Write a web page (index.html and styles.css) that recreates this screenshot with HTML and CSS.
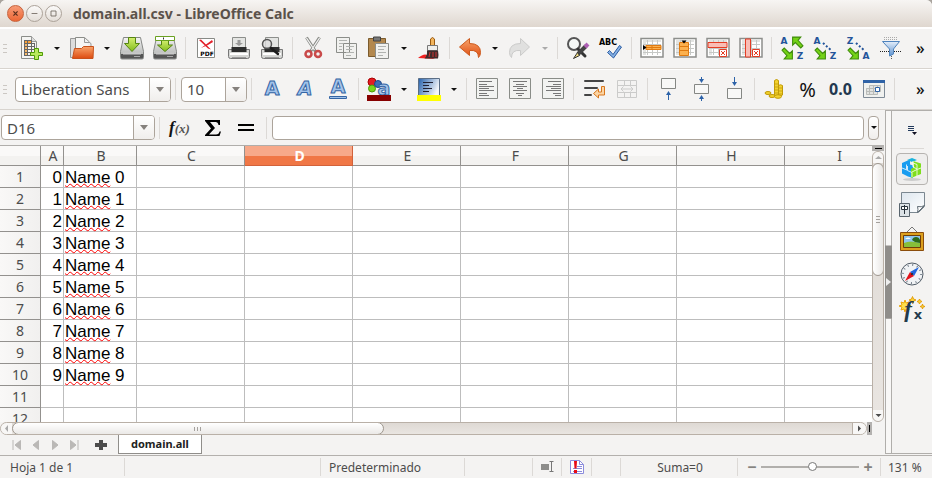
FILE: index.html
```html
<!DOCTYPE html>
<html lang="es">
<head>
<meta charset="utf-8">
<title>domain.all.csv - LibreOffice Calc</title>
<link rel="stylesheet" href="styles.css">
</head>
<body>
<svg class="defs" width="0" height="0" aria-hidden="true">
  <defs>
    <linearGradient id="orange" x2="0" y2="1"><stop offset="0" stop-color="#f9a56c"/><stop offset="1" stop-color="#dd4b10"/></linearGradient>
    <linearGradient id="metal" x2="0" y2="1"><stop offset="0" stop-color="#f4f4f4"/><stop offset="1" stop-color="#a9aba9"/></linearGradient>
    <linearGradient id="blue" x2="0" y2="1"><stop offset="0" stop-color="#e4eefa"/><stop offset="1" stop-color="#5d92d0"/></linearGradient>
    <linearGradient id="marine" x2="1" y2="0.4"><stop offset="0" stop-color="#2460ac"/><stop offset="1" stop-color="#f3f6fa"/></linearGradient>
    <linearGradient id="green" x2="0" y2="1"><stop offset="0" stop-color="#d4ef70"/><stop offset="1" stop-color="#83bd1c"/></linearGradient>
    <linearGradient id="paper" x2="1" y2="1"><stop offset="0" stop-color="#dde6ee"/><stop offset="1" stop-color="#fff"/></linearGradient>
    <symbol id="i-drive" viewBox="0 0 24 24">
      <path d="M3.500 1.500h17l3 14v6q0 1.500-1.500 1.500H2Q.5 23 .5 21.500v-6z" fill="url(#metal)" stroke="#858785"/>
      <path d="M1 18h22v3.500q0 1-1 1H2q-1 0-1-1z" fill="#555"/><path d="M3 16.500h18v2H3z" fill="#c9c9c9"/><path d="M14 20.500h6" stroke="#aaa"/>
    </symbol>
    <symbol id="i-down" viewBox="0 0 24 24"><path d="M8.500 1.500h7v6h4L12 15.500 4.500 7.500h4z" fill="url(#green)" stroke="#548411"/></symbol>
    <symbol id="i-printer" viewBox="0 0 24 24">
      <path d="M5.500 1.500h13v11h-13z" fill="#e4e5e3" stroke="#8c8e8b"/>
      <path d="M1.500 13.500h21v7q0 2-2 2h-17q-2 0-2-2z" fill="#d5d6d4" stroke="#777"/>
      <path d="M4.500 11h15v5h-15z" fill="#2c2d2d"/><path d="M3 17h18v2H3z" fill="#fff"/><path d="M5 21h14v1H5z" fill="#999"/>
    </symbol>
    <symbol id="i-page" viewBox="0 0 24 24"><path d="M1.500 1.500h21v20h-21z" fill="#f2f3f1" stroke="#8a8d88"/></symbol>
    <symbol id="i-sheet" viewBox="0 0 24 24">
      <path d="M1 2.500h22v18.500H1z" fill="#fff" stroke="#8d8f8c" stroke-width="1.500"/>
      <path d="M3 4h18v2H3zM3 4h3v15H3z" fill="#e3e4e2"/>
      <path d="M3 8.500h18M3 12.500h18M3 16.500h18M7.500 4v15M12.500 4v15M17.500 4v15" stroke="#c6c8c5"/>
    </symbol>
    <symbol id="i-sortarrow" viewBox="0 0 12 12"><path d="M1 3 3 1l5 5 2.500-2.500V11H3l2.500-3z" fill="#73d216" stroke="#3f8b0a"/></symbol>
  </defs>
</svg>

<div class="window">
  <header class="titlebar">
    <button class="win-btn close" aria-label="Cerrar"><svg viewBox="0 0 18 18"><path d="m6.500 6.500 5 5m0-5-5 5"/></svg></button>
    <button class="win-btn" aria-label="Minimizar"><svg viewBox="0 0 18 18"><path d="M5.500 9h7"/></svg></button>
    <button class="win-btn" aria-label="Maximizar"><svg viewBox="0 0 18 18"><path d="M6 6h6v6H6z"/></svg></button>
    <h1>domain.all.csv - LibreOffice Calc</h1>
  </header>

  <div class="toolbar" role="toolbar" aria-label="Estándar">
    <span class="grip"></span>
    <button class="tool" aria-label="Nuevo"><svg viewBox="0 0 24 24"><path d="M1.500.500h10l5 5v17h-15z" fill="#f5f5f3" stroke="#8b8d89"/><path d="M11.500.500v5h5" fill="#ddd" stroke="#999"/><path d="M4 4h8v3H4z" fill="#f7a13a"/><path d="M4 7h3v12H4z" fill="#f9b968"/><path d="M4.500 4v15M7.500 4v15M11.500 4v15M14.500 7v7M4 4.500h8M4 7.500h11M4 10.500h11M4 13.500h11M4 16.500h8M4 19.500h8" stroke="#666" fill="none"/><path d="M14.500 12.500h4v4h4v3h-4v4h-4v-4h-4v-3h4z" fill="#b8ea5c" stroke="#4e9a06"/></svg></button>
    <button class="drop" aria-label="Plantillas"></button>
    <button class="tool" aria-label="Abrir"><svg viewBox="0 0 24 24"><path d="M.5 21.500v-19h6l1 2h4v17z" fill="#ddd" stroke="#999"/><path d="M5.500 13V1.500h9L19.500 6v9" fill="#f6f6f5" stroke="#8b8d89"/><path d="M14.500 1.500v5h5l1.500 1v7" fill="#eee" stroke="#999"/><path d="M4.500 12.500h7l2-2h10l-.5 12H2.500z" fill="url(#orange)" stroke="#c8511b"/></svg></button>
    <button class="drop" aria-label="Recientes"></button>
    <button class="tool" aria-label="Guardar"><svg viewBox="0 0 24 24"><use href="#i-drive"/><use href="#i-down"/></svg></button>
    <button class="tool" aria-label="Guardar como"><svg viewBox="0 0 24 24"><use href="#i-drive"/><path d="M8.500 4h7v5h4L12 15.500 4.500 9h4z" fill="url(#green)" stroke="#548411"/><path d="M2.500.500h19v4h-19z" fill="#fff" stroke="#6aa121"/><path d="M10.500 1.500v2" stroke="#333"/></svg></button>
    <span class="sep"></span>
    <button class="tool" aria-label="Exportar a PDF"><svg viewBox="0 0 24 24"><path d="M3.500 2.500h17v19h-17z" fill="#fff" stroke="#888a86"/><path d="M5 4l2-.5 10 10-3-1zM18 4l1 2-5 3-7 3 7-5z" fill="#e3202a"/><text x="13" y="20" class="pdf">PDF</text></svg></button>
    <button class="tool" aria-label="Imprimir"><svg viewBox="0 0 24 24"><use href="#i-printer"/><path d="M10.500 4h3v3H16l-4 3-4-3h2.500z" fill="#999"/></svg></button>
    <button class="tool" aria-label="Vista previa"><svg viewBox="0 0 24 24"><use href="#i-printer"/><circle cx="7" cy="8" r="4.500" fill="#ddd" fill-opacity=".8" stroke="#555" stroke-width="1.500"/><path d="m11 12 7 6" stroke="#1d1d1d" stroke-width="2.500" stroke-linecap="round"/></svg></button>
    <span class="sep"></span>
    <button class="tool" aria-label="Cortar"><svg viewBox="0 0 24 24"><path d="m5.500 1.500 9 14M18.500 1.500l-9 14" stroke="#888a85" stroke-width="3"/><path d="m5.500 2 8 12M18.500 2l-8 12" stroke="#f3f3f3" stroke-width="1.300"/><circle cx="7.500" cy="18" r="3" fill="none" stroke="#c94a4a" stroke-width="2.500"/><circle cx="17" cy="18" r="3" fill="none" stroke="#c94a4a" stroke-width="2.500"/></svg></button>
    <button class="tool" aria-label="Copiar"><svg viewBox="0 0 24 24"><path d="M2.500 1.500h13v15h-13zM9.500 7.500h13v15h-13z" fill="#f1f1ef" stroke="#8b8d89"/><path d="M5 4.500h8M5 7.500h4M5 10.500h3M5 13.500h3M12 10.500h8M12 13.500h6M12 16.500h8M12 19.500h5" stroke="#b1b3b0"/></svg></button>
    <button class="tool" aria-label="Pegar"><svg viewBox="0 0 24 24"><path d="M1.500 2.500h17v18h-17z" fill="#b3884e" stroke="#7b5b2d"/><path d="M6.500 1h7v4h-7z" fill="#777" stroke="#444"/><path d="M8.500 7.500h13v15h-13z" fill="#f1f1ef" stroke="#8b8d89"/><path d="M11 10.500h8M11 13.500h6M11 16.500h8M11 19.500h5" stroke="#b1b3b0"/></svg></button>
    <button class="drop" aria-label="Opciones de pegado"></button>
    <button class="tool" aria-label="Clonar formato"><svg viewBox="0 0 24 24"><path d="M1 22q6-5 9-3l8 4z" fill="#ef2020"/><path d="M13.500 3q2-3 4 0v7h-4z" fill="#f1b45c" stroke="#9a5b12"/><path d="M10.500 9.500h10v5h-10z" fill="#eeeeec" stroke="#777"/><path d="M10 14.500h11q1 5 0 8H7.500q3-3 2.500-8z" fill="#3e2b2b"/><path d="m13 16-1 5m4-5v5m3-5v5" stroke="#c33"/></svg></button>
    <span class="sep"></span>
    <button class="tool" aria-label="Deshacer"><svg viewBox="0 0 24 24"><path d="M11.500 2.500v5q11 0 11 9 0 3-2 5 0-8-9-7v5L1.500 11z" fill="url(#orange)" stroke="#cc5a1e"/></svg></button>
    <button class="drop" aria-label="Historial deshacer"></button>
    <button class="tool" aria-label="Restaurar" disabled><svg viewBox="0 0 24 24"><path d="M12.500 2.500v5q-11 0-11 9 0 3 2 5 0-8 9-7v5l9-8.500z" fill="#e0e0df" stroke="#cbcbca"/></svg></button>
    <button class="drop" aria-label="Historial restaurar" disabled></button>
    <span class="sep"></span>
    <button class="tool" aria-label="Buscar y reemplazar"><svg viewBox="0 0 24 24"><circle cx="8" cy="8" r="6" fill="#f5f8f6" stroke="#555" stroke-width="2"/><path d="m12 13 7 7" stroke="#333" stroke-width="3" stroke-linecap="round"/><path d="m20 10-8 8" stroke="#444" stroke-width="4"/><path d="m22 8-3 3" stroke="#ad5fb4" stroke-width="4"/><path d="m11.500 16.500-4 6 6-3z" fill="#f0dc80" stroke="#333"/></svg></button>
    <button class="tool" aria-label="Ortografía"><svg viewBox="0 0 24 24"><text x="9" y="9" class="abc">ABC</text><path d="m8.500 16.500 2-2 3.500 4 6.500-9 2 1.500-8 11z" fill="#86b1e4" stroke="#2a5ba2"/></svg></button>
    <span class="sep"></span>
    <button class="tool" aria-label="Insertar fila"><svg viewBox="0 0 24 24"><use href="#i-sheet"/><path d="M6 9.500h15v4H6zM6 11.500h15M12 9v5" fill="#fcb14f" stroke="#e07a10"/><path d="m3 9 3.500 2.500L3 14z"/></svg></button>
    <button class="tool" aria-label="Insertar columna"><svg viewBox="0 0 24 24"><use href="#i-sheet"/><path d="M6.500 6.500h9v13h-9zM6.500 10.500h9M6.500 14.500h9" fill="#fcb14f" stroke="#e07a10"/><path d="M8.500 4.500h5L11 7.500z"/></svg></button>
    <button class="tool" aria-label="Eliminar fila"><svg viewBox="0 0 24 24"><use href="#i-sheet"/><path d="M2 6.500h19v5H2z" fill="#f9bdb5" stroke="#e43d25"/><path d="M13.500 13.500h7v7h-7z" fill="#fff" stroke="#e43d25"/><path d="m15 15 4 4m0-4-4 4" stroke="#e43d25"/></svg></button>
    <button class="tool" aria-label="Eliminar columna"><svg viewBox="0 0 24 24"><use href="#i-sheet"/><path d="M6.500 3h5v18h-5z" fill="#f9bdb5" stroke="#e43d25"/><path d="M13.500 13.500h7v7h-7z" fill="#fff" stroke="#e43d25"/><path d="m15 15 4 4m0-4-4 4" stroke="#e43d25"/></svg></button>
    <span class="sep"></span>
    <button class="tool" aria-label="Ordenar"><svg viewBox="0 0 24 24"><use href="#i-sortarrow" x="1" y="11" width="13" height="13"/><g transform="rotate(180 17.500 6.500)"><use href="#i-sortarrow" x="11" y="0" width="13" height="13"/></g><text x="4" y="8" class="az">A</text><text x="20" y="23" class="az">Z</text></svg></button>
    <button class="tool" aria-label="Orden ascendente"><svg viewBox="0 0 24 24"><use href="#i-sortarrow" x="1" y="11" width="13" height="13"/><path d="m10 7 9 8" class="dots"/><text x="4" y="8" class="az">A</text><text x="20" y="23" class="az">Z</text></svg></button>
    <button class="tool" aria-label="Orden descendente"><svg viewBox="0 0 24 24"><use href="#i-sortarrow" x="1" y="11" width="13" height="13"/><path d="m10 7 9 8" class="dots"/><text x="4" y="8" class="az">Z</text><text x="20" y="23" class="az">A</text></svg></button>
    <button class="tool" aria-label="Filtro automático"><svg viewBox="0 0 24 24"><path d="M5 1.500h14M5 3.500h14" stroke="#aaa" stroke-dasharray="1 1"/><path d="M1 15.500h22" stroke="#222" stroke-dasharray="1 1"/><path d="M3.500 5.500h17L14.500 13v5l-4 2v-7z" fill="url(#blue)" stroke="#4f83bd"/><path d="M12.500 20v4" stroke="#555" stroke-dasharray="1 1"/></svg></button>
    <button class="more" aria-label="Más">»</button>
  </div>

  <div class="toolbar" role="toolbar" aria-label="Formato">
    <span class="grip"></span>
    <div class="combo font-name"><input type="text" value="Liberation Sans" aria-label="Nombre de fuente"><button aria-label="Lista de fuentes"></button></div>
    <span class="sep"></span>
    <div class="combo font-size"><input type="text" value="10" aria-label="Tamaño de fuente"><button aria-label="Lista de tamaños"></button></div>
    <span class="sep"></span>
    <button class="tool" aria-label="Negrita"><svg viewBox="0 0 24 24"><text x="12" y="18" class="letter bold">A</text></svg></button>
    <button class="tool" aria-label="Cursiva"><svg viewBox="0 0 24 24"><text x="12" y="18" class="letter italic">A</text></svg></button>
    <button class="tool" aria-label="Subrayado"><svg viewBox="0 0 24 24"><text x="12" y="16" class="letter">A</text><path d="M3.500 19.500h17v2h-17z" fill="#9fc1ea" stroke="#3465a4"/></svg></button>
    <span class="sep"></span>
    <button class="tool" aria-label="Color del carácter"><svg viewBox="0 0 24 24"><circle cx="5" cy="5" r="4" fill="#e31b23" stroke="#a00"/><circle cx="5" cy="11.500" r="3.500" fill="#7bd51e" stroke="#4e9a06"/><circle cx="11" cy="7" r="3.500" fill="#3d6fb5" stroke="#1f4788"/><text x="17" y="18" class="letter">a</text><path d="M0 18h24v6H0z" fill="#870000"/></svg></button>
    <button class="drop" aria-label="Elegir color de texto"></button>
    <button class="tool" aria-label="Color de fondo"><svg viewBox="0 0 24 24"><path d="M1.500 1.500h21v18h-21z" fill="url(#marine)" stroke="#5b6e86"/><path d="M6 5.500h10M6 8.500h6M6 11.500h9M6 14.500h6" stroke="#223"/><path d="M0 18h24v6H0z" fill="#ff0"/></svg></button>
    <button class="drop" aria-label="Elegir color de fondo"></button>
    <span class="sep"></span>
    <button class="tool" aria-label="Izquierda"><svg viewBox="0 0 24 24"><use href="#i-page"/><path class="lines" d="M4 4.500h13M4 7.500h8M4 9.500h15M4 11.500h10M4 13.500h15M4 16.500h8M4 18.500h10"/></svg></button>
    <button class="tool" aria-label="Centro"><svg viewBox="0 0 24 24"><use href="#i-page"/><path class="lines" d="M5 4.500h14M8 7.500h8M5 9.500h14M9 11.500h6M5 13.500h14M8 16.500h8M10 18.500h4"/></svg></button>
    <button class="tool" aria-label="Derecha"><svg viewBox="0 0 24 24"><use href="#i-page"/><path class="lines" d="M7 4.500h13M12 7.500h8M5 9.500h15M10 11.500h10M5 13.500h15M12 16.500h8M14 18.500h6"/></svg></button>
    <span class="sep"></span>
    <button class="tool" aria-label="Ajustar texto"><svg viewBox="0 0 24 24"><path d="M3 4h18M3 11h12M3 18h6" stroke="#444" stroke-width="2" stroke-linecap="round"/><path d="M19.500 9.500h3V18h-6v3l-5-4.500 5-4.500v3h3z" fill="#fbd5a5" stroke="#d9771c"/></svg></button>
    <button class="tool" aria-label="Combinar celdas" disabled><svg viewBox="0 0 24 24"><path d="M2.500 3.500h19v17h-19zM2.500 8.500h19M2.500 15.500h19M9.500 3v5M15.500 3v5M9.500 16v4M15.500 16v4M6 12h12M8.500 9.500 6 12l2.500 2.500m7-5L18 12l-2.500 2.500" fill="none" stroke="#cbcbca"/></svg></button>
    <span class="sep"></span>
    <button class="tool" aria-label="Arriba"><svg viewBox="0 0 24 24"><path class="cell" d="M5.500 1.500h14v10h-14z"/><path class="arr" d="M12.500 14 15 18h-2v5h-1v-5h-2z"/></svg></button>
    <button class="tool" aria-label="Centrar verticalmente"><svg viewBox="0 0 24 24"><path class="cell" d="M5.500 7.500h14v9h-14z"/><path class="arr" d="M12.500 6 15 2h-2V0h-1v2h-2zM12.500 18l2.500 4h-2v2h-1v-2h-2z"/></svg></button>
    <button class="tool" aria-label="Abajo"><svg viewBox="0 0 24 24"><path class="cell" d="M5.500 11.500h14v10h-14z"/><path class="arr" d="M12.500 9 15 5h-2V0h-1v5h-2z"/></svg></button>
    <span class="sep"></span>
    <button class="tool" aria-label="Moneda"><svg viewBox="0 0 24 24"><g fill="#f3d22d" stroke="#c19a08"><path d="M11.500 3.500q2-2 4 0V18q-2 2-4 0zM15.500 8.500q2-1.500 4 0V18q-2 2-4 0z"/><ellipse cx="5" cy="16" rx="3" ry="1.500"/><ellipse cx="9" cy="19" rx="3" ry="1.500"/><ellipse cx="15" cy="19.500" rx="3.500" ry="1.800"/></g><path d="M12 7h3m-3 3h3m-3 3h3m-3 3h3m1-5h3m-3 3h3m-3 3h3" stroke="#c9a515"/></svg></button>
    <button class="tool glyph percent" aria-label="Porcentaje">%</button>
    <button class="tool glyph number" aria-label="Número">0.0</button>
    <button class="tool" aria-label="Fecha"><svg viewBox="0 0 24 24"><path d="M1.500 3.500h21v17h-21z" fill="#f0f1ef" stroke="#7f8a96"/><path d="M1 3h22v3H1z" fill="#2f62a6"/><path d="M7.500 8.500h11v6h-3v3h-11v-6h3zM4.500 11.500h14M4.500 14.500h11M7.500 9v8M11.500 9v8M15.500 9v5" fill="#e2e3e1" stroke="#b9bbb8"/><path d="M13.500 10.500h4v4h-4z" fill="#fff" stroke="#2f62a6"/></svg></button>
    <span class="sep"></span>
    <button class="more" aria-label="Más">»</button>
  </div>

  <div class="workspace">
    <main class="document">
      <div class="formula-bar">
        <div class="combo name-box"><input type="text" value="D16" aria-label="Cuadro de nombre"><button aria-label="Lista de nombres"></button></div>
        <span class="sep"></span>
        <button class="tool glyph fx" aria-label="Asistente de funciones">f<small>(x)</small></button>
        <button class="tool" aria-label="Suma"><svg viewBox="0 0 24 24"><path d="M4 4h15v5h-1.500q-.5-3-3-3H9l5 6-6 6.500h7q3 0 3.500-3H20L18.500 20H4v-1l6-6.500L4 5z"/></svg></button>
        <button class="tool" aria-label="Función"><svg viewBox="0 0 24 24"><path d="M4 8h16v2H4zM4 13h16v2H4z"/></svg></button>
        <span class="sep"></span>
        <input class="formula" type="text" aria-label="Línea de entrada">
        <button class="expand" aria-label="Expandir barra de fórmulas"></button>
      </div>

      <div class="sheet">
        <div class="viewport">
          <table>
            <colgroup><col class="c-head"><col class="c-a"><col class="c-b"><col span="7" class="c-std"></colgroup>
            <thead><tr><th></th><th>A</th><th>B</th><th>C</th><th class="current">D</th><th>E</th><th>F</th><th>G</th><th>H</th><th>I</th></tr></thead>
            <tbody>
              <tr><th>1</th><td class="num">0</td><td><u>Name</u> 0</td><td></td><td></td><td></td><td></td><td></td><td></td><td></td></tr>
              <tr><th>2</th><td class="num">1</td><td><u>Name</u> 1</td><td></td><td></td><td></td><td></td><td></td><td></td><td></td></tr>
              <tr><th>3</th><td class="num">2</td><td><u>Name</u> 2</td><td></td><td></td><td></td><td></td><td></td><td></td><td></td></tr>
              <tr><th>4</th><td class="num">3</td><td><u>Name</u> 3</td><td></td><td></td><td></td><td></td><td></td><td></td><td></td></tr>
              <tr><th>5</th><td class="num">4</td><td><u>Name</u> 4</td><td></td><td></td><td></td><td></td><td></td><td></td><td></td></tr>
              <tr><th>6</th><td class="num">5</td><td><u>Name</u> 5</td><td></td><td></td><td></td><td></td><td></td><td></td><td></td></tr>
              <tr><th>7</th><td class="num">6</td><td><u>Name</u> 6</td><td></td><td></td><td></td><td></td><td></td><td></td><td></td></tr>
              <tr><th>8</th><td class="num">7</td><td><u>Name</u> 7</td><td></td><td></td><td></td><td></td><td></td><td></td><td></td></tr>
              <tr><th>9</th><td class="num">8</td><td><u>Name</u> 8</td><td></td><td></td><td></td><td></td><td></td><td></td><td></td></tr>
              <tr><th>10</th><td class="num">9</td><td><u>Name</u> 9</td><td></td><td></td><td></td><td></td><td></td><td></td><td></td></tr>
              <tr><th>11</th><td></td><td></td><td></td><td></td><td></td><td></td><td></td><td></td><td></td></tr>
              <tr><th>12</th><td></td><td></td><td></td><td></td><td></td><td></td><td></td><td></td><td></td></tr>
            </tbody>
          </table>
        </div>
        <div class="vscroll">
          <span class="split-box"></span>
          <div class="track">
            <button class="step" aria-label="Subir"><svg viewBox="0 0 9 9"><path d="M1 6h7L4.500 3z" fill="#aaa"/></svg></button>
            <div class="thumb"><i></i></div>
            <button class="step end" aria-label="Bajar"><svg viewBox="0 0 9 9"><path d="M1.500 3h6L4.500 6z"/></svg></button>
          </div>
        </div>
        <div class="hscroll">
          <div class="track">
            <button class="step" aria-label="Izquierda"><svg viewBox="0 0 9 9"><path d="M6 1v7L3 4.500z" fill="#aaa"/></svg></button>
            <div class="thumb"><i></i></div>
            <button class="step end" aria-label="Derecha"><svg viewBox="0 0 9 9"><path d="M3 1.500v6l3-3z"/></svg></button>
          </div>
          <span class="split-box"></span>
        </div>
      </div>

      <nav class="tabs" aria-label="Hojas">
        <button aria-label="Primera hoja"><svg viewBox="0 0 12 12"><path d="M2 1v10M9.500 1.500v9L4 6z"/></svg></button>
        <button aria-label="Hoja anterior"><svg viewBox="0 0 12 12"><path d="M8.500 1.500v9L3 6z"/></svg></button>
        <button aria-label="Hoja siguiente"><svg viewBox="0 0 12 12"><path d="M3.500 1.500v9L9 6z"/></svg></button>
        <button aria-label="Última hoja"><svg viewBox="0 0 12 12"><path d="M10 1v10M2.500 1.500v9L8 6z"/></svg></button>
        <button class="add" aria-label="Agregar hoja"><svg viewBox="0 0 12 12"><path d="M4 1h4v3h4v4H8v3H4V8H0V4h4z"/></svg></button>
        <a class="tab" href="#">domain.all</a>
      </nav>
    </main>

    <div class="splitter"><button aria-label="Ocultar barra lateral"><svg viewBox="0 0 5 8"><path d="M0 0v8l5-4z"/></svg></button></div>

    <aside class="sidebar">
      <button class="menu" aria-label="Configuración de la barra lateral"><svg viewBox="0 0 12 12"><path d="M2 2.500h6M2 4.500h6M2 6.500h6" stroke="#223a5c"/><path d="M6 8h5L8.500 11z" fill="#112"/></svg></button>
      <button class="side active" aria-label="Propiedades"><svg viewBox="0 0 26 26"><ellipse cx="13" cy="23.500" rx="9" ry="1.500" fill="#ccc"/><path d="m3 7 8-3.500v5l3 1V22l-5-1.500-6-3z" fill="#1a9df0"/><path d="m8 4 5-2 5 2-5 2z" fill="#1bb3dc"/><path d="m14 5 8 2.500V18l-5 2-5 2v-9l3-2z" fill="#7ede1c"/><path d="m3 12 5 2M7.500 8.500v5M13 16l5-2.500 4-1.500M8.500 10v4.500l4.500 2v5M14 5v6l4 2V8.500L14 7M18 13.500V20" fill="none" stroke="#fff" stroke-width=".8"/></svg></button>
      <button class="side" aria-label="Página"><svg viewBox="0 0 26 26"><path d="M2.500 1.500h23v14l-6 6h-17z" fill="url(#paper)" stroke="#7b8790"/><path d="M18.500 21.500q1-3 0-6 4 1 7-1z" fill="#fff" stroke="#5f6b74"/><path d="M.5 12.500h10v13H.5z" fill="#dce2e6" stroke="#59646d"/><path d="M2.500 15.500h6v3h-6zM5.500 14v9" fill="#fff" stroke="#27313a"/></svg></button>
      <button class="side" aria-label="Galería"><svg viewBox="0 0 26 26"><path d="m8 6 5-5 5 5" fill="none" stroke="#777"/><path d="M1.500 6.500h23v18h-23z" fill="#dca01e" stroke="#8b4d0c"/><path d="M4.500 9.500h17v12h-17z" fill="#8ec5ee" stroke="#6f3d08"/><path d="M5 17q6-3 16 0v4H5z" fill="#86bf3a"/><path d="M13 14q1-3 4-3t4 3v3l-5-1z" fill="#2c6b1a"/><path d="M6 13q3-3 6 0z" fill="#fff"/></svg></button>
      <button class="side" aria-label="Navegador"><svg viewBox="0 0 26 26"><circle cx="13" cy="13" r="11" fill="#f1f3f5" stroke="#515b66"/><circle cx="13" cy="13" r="9" fill="none" stroke="#727d88" stroke-width="2" stroke-dasharray="1 3.710"/><path d="m20 6-5 9-4-4z" fill="#2266dd"/><path d="m6 20 5-9 4 4z" fill="#e2131b"/><circle cx="13" cy="13" r="1" fill="#222"/></svg></button>
      <button class="side" aria-label="Funciones"><svg viewBox="0 0 26 26"><path d="m6 4 1 3 3-1-1 3 3 1-3 1 1 3-3-1-1 3-1-3-3 1 1-3-3-1 3-1-1-3 3 1z" fill="#fde04a" stroke="#eaa50a"/><path d="m13.500.500 1 2.500 2.500 1-2.500 1-1 2.500-1-2.500L10 4l2.500-1zM20.500 3l.8 1.700L23 5.500l-1.700.8-.8 1.700-.8-1.700L18 5.500l1.700-.8zM23.500 8l.6 1.900L26 10.500l-1.900.6-.6 1.900-.6-1.900-1.900-.6 1.900-.6z" fill="#fdd53a" stroke="#e3a00e"/><text x="9" y="21" class="side-f">f</text><text x="19" y="23" class="side-x">x</text></svg></button>
    </aside>
  </div>

  <footer class="statusbar">
    <span class="first">Hoja 1 de 1</span>
    <span></span><span class="style-name">Predeterminado</span><span></span>
    <span class="icon"><svg viewBox="0 0 14 12"><path d="M1 3h8v6H1z" fill="#8d8d8b"/><path d="M9.500.500h4M9.500 10.500h4M11.500 1v9" stroke="#777"/></svg></span>
    <span class="icon"><svg viewBox="0 0 14 14"><path d="M.5.500h9l4 4v9H.5z" fill="#fff" stroke="#8c8cdc"/><path d="M9.500.500v4h4M7 6.500h5M3 8.500h9M3 11.500h9" fill="none" stroke="#8c8cdc"/><path d="M4 1h3l-.5 7.500h-2zM4 10h3v3H4z" fill="#e80a14"/></svg></span>
    <span></span>
    <span class="sum">Suma=0</span>
    <span class="zoom"><button aria-label="Reducir">&minus;</button><input type="range" min="0" max="100" value="53" aria-label="Escala"><button aria-label="Ampliar">+</button></span>
    <span class="percent-value">131 %</span>
  </footer>
</div>
</body>
</html>
```
FILE: styles.css
```css
* { box-sizing: border-box; }

body {
  margin: 0;
  background: #a9a49e;
  color: #4c4c4c;
  font-family: "Noto Sans", "Open Sans", sans-serif;
  font-size: 14px;
}

button, input {
  margin: 0;
  padding: 0;
  border: 0;
  background: none;
  color: inherit;
  font: inherit;
}

svg { display: block; overflow: visible; }
.defs { position: absolute; }

.window {
  display: flex;
  flex-direction: column;
  height: 100vh;
  overflow: hidden;
  border-radius: 6px 6px 0 0;
  background: #f4f3f2;
}

/* Title bar */
.titlebar {
  display: flex;
  flex: none;
  align-items: center;
  gap: 2px;
  height: 28px;
  padding-left: 7px;
  background: linear-gradient(#f7f5f3, #dfd7cf);
  border-bottom: 1px solid #fff;
}
.titlebar h1 {
  margin: 0 0 0 9px;
  color: #5b524b;
  font-size: 14px;
  line-height: 28px;
}
.win-btn {
  width: 17px;
  height: 17px;
  border: 1px solid #aaa198;
  border-radius: 50%;
  background: linear-gradient(#fbfaf9, #e4ded8);
}
.win-btn svg { width: 15px; height: 15px; fill: none; stroke: #6d655d; }
.win-btn.close { border-color: #c5623c; background: linear-gradient(#f79b77, #ec6735); }
.win-btn.close svg { stroke: #5c2f1d; stroke-width: 1.5; }

/* Toolbars */
.toolbar {
  display: flex;
  flex: none;
  align-items: center;
  height: 41px;
  border-bottom: 1px solid #d8d4cf;
  box-shadow: inset 0 1px #fff;
}
.grip {
  flex: none;
  width: 4px;
  height: 9px;
  margin: 0 8px 0 3px;
  background: repeating-linear-gradient(#cbc7c3 0 1px, transparent 1px 4px);
}
.tool {
  display: flex;
  flex: none;
  align-items: center;
  justify-content: center;
  width: 33px;
  height: 32px;
}
.tool svg { width: 24px; height: 24px; }
.drop { flex: none; width: 17px; height: 32px; }
.drop::before, .expand::before {
  content: "";
  display: block;
  box-sizing: content-box;
  width: 0;
  margin: 0 auto;
  border-top: 3px solid #111;
  border-left: 3px solid transparent;
  border-right: 3px solid transparent;
}
.drop:disabled::before { border-top-color: #aaa; }
.sep {
  flex: none;
  width: 1px;
  height: 22px;
  margin: 0 3px 0 4px;
  background: #dcd9d6;
}
.more { width: 16px; margin-left: auto; color: #111; font-size: 16px; font-weight: 500; line-height: 20px; text-align: left; }

.pdf { font: bold 6px "DejaVu Sans", sans-serif; text-anchor: middle; }
.abc { font: bold 8px "DejaVu Sans", sans-serif; text-anchor: middle; }
.az { fill: #24549a; font: bold 9px "DejaVu Sans", sans-serif; text-anchor: middle; }
.dots { stroke: #24549a; stroke-width: 2; stroke-dasharray: 2 2; }
.lines { stroke: #777; }
.cell { fill: #f8f8f7; stroke: #858784; }
.arr { fill: #2c62a8; }
.letter { fill: #a3c3ea; stroke: #3465a4; font: bold 19px "DejaVu Sans", sans-serif; text-anchor: middle; }
.letter.italic { font-style: italic; }

.glyph { color: #111; }
.percent { font-size: 20px; }
.number { color: #22384f; font-size: 16px; font-weight: 700; }
.fx { align-items: baseline; font: italic bold 17px "Liberation Serif", serif; line-height: 31px; }
.fx small { color: #555; font-size: 13px; }

/* Boxes with a list button */
.combo {
  display: flex;
  flex: none;
  height: 25px;
  border: 1px solid #aca49b;
  border-radius: 4px;
  background: #fff;
  font-size: 15px;
  overflow: hidden;
}
.combo input { flex: 1; min-width: 0; padding-left: 5px; outline: 0; }
.combo button { width: 21px; border-left: 1px solid #aca49b; background: linear-gradient(#fff, #f0eeec); }
.combo button::before {
  content: "";
  display: block;
  width: 0;
  margin: 0 auto;
  border-top: 5px solid #85817d;
  border-left: 4px solid transparent;
  border-right: 4px solid transparent;
}
.font-name { width: 156px; }
.font-size { width: 66px; margin-left: 2px; }
.name-box { width: 154px; margin-left: 1px; }

/* Document area */
.workspace { display: flex; flex: 1; min-height: 0; border-bottom: 1px solid #b3b0ad; }
.document { display: flex; flex: 1; flex-direction: column; min-width: 0; }

.formula-bar { display: flex; flex: none; align-items: center; height: 35px; padding-right: 6px; }
.formula {
  flex: 1;
  min-width: 0;
  height: 24px;
  margin: 0 4px 0 2px;
  padding: 0 4px;
  border: 1px solid #aca49b;
  border-radius: 4px;
  background: #fff;
}
.expand { width: 11px; height: 24px; border: 1px solid #aca49b; border-radius: 4px; background: linear-gradient(#fff, #f0eeec); }

.sheet {
  display: grid;
  flex: 1;
  grid-template-columns: minmax(0, 1fr) 13px;
  grid-template-rows: minmax(0, 1fr) 13px;
  min-height: 0;
}
.viewport { overflow: hidden; border-top: 1px solid #b0aeab; background: #fff; }

table { width: 893px; table-layout: fixed; border-collapse: separate; border-spacing: 0; }
.c-head { width: 41px; }
.c-a { width: 23px; }
.c-b { width: 73px; }
.c-std { width: 108px; }
th, td { height: 22px; padding: 0; border-right: 1px solid #bdbdbd; border-bottom: 1px solid #bdbdbd; line-height: 21px; white-space: nowrap; }
th { border-color: #93918e; background: linear-gradient(90deg, #f9f8f7, #f1f0ef); color: #4c4c4c; font-weight: 400; }
thead th { height: 20px; padding-left: 2px; line-height: 19px; background: linear-gradient(#faf9f8 50%, #f3f2f0 50%); }
thead th.current { border-color: #d2623b; background: linear-gradient(#f7a98a 50%, #f07746 50%); color: #fff; font-weight: 700; }
td { padding: 2px 0 0 1px; color: #000; font-family: "Liberation Sans", Arial, sans-serif; font-size: 17px; line-height: 19px; }
.num { padding-right: 1px; text-align: right; }
u { text-decoration: underline wavy #f00 1px; text-underline-offset: 0; text-decoration-skip-ink: none; }

/* Scroll bars */
.vscroll { display: flex; flex-direction: column; padding-right: 1px; }
.hscroll { display: flex; }
.track {
  display: flex;
  flex: 1;
  min-width: 0;
  min-height: 0;
  border: 1px solid #b9b0a7;
  border-radius: 7px;
  background: linear-gradient(#ded9d4, #e9e5e1);
  overflow: hidden;
}
.vscroll .track { flex-direction: column; }
.step { display: flex; flex: none; align-items: center; justify-content: center; width: 11px; height: 11px; background: #f8f7f6; fill: #4c4c4c; }
.step svg { width: 9px; height: 9px; }
.thumb { display: flex; align-items: center; justify-content: center; border: 1px solid #9e978f; border-radius: 7px; }
.vscroll .thumb { height: 42%; margin: 0 -1px; background: linear-gradient(90deg, #fff, #e9e7e5); }
.hscroll .thumb { width: 43%; margin: -1px 0; background: linear-gradient(#fff, #ebe9e7); }
.thumb i { width: 7px; height: 7px; background: repeating-linear-gradient(90deg, #a5a19d 0 1px, transparent 1px 3px); }
.hscroll .thumb i { height: 4px; }
.vscroll .thumb i { width: 4px; background: repeating-linear-gradient(#a5a19d 0 1px, transparent 1px 3px); }
.vscroll .end { margin-top: auto; border-radius: 0 0 6px 6px; }
.hscroll .end { width: 14px; margin-left: auto; border-left: 1px solid #b9b0a7; }
.split-box { display: flex; flex: none; align-items: center; justify-content: center; background: #b3b1af; }
.split-box::before { content: ""; background: #000; }
.vscroll .split-box { height: 6px; }
.vscroll .split-box::before { width: 7px; height: 1px; }
.hscroll .split-box { width: 5px; }
.hscroll .split-box::before { width: 1px; height: 7px; }

/* Sheet tabs */
.tabs { display: flex; flex: none; align-items: center; height: 20px; padding-left: 7px; }
.tabs button { width: 19px; height: 18px; }
.tabs svg { width: 12px; height: 12px; margin: 0 auto; fill: #bab8b6; stroke: #bab8b6; stroke-width: 1; }
.tabs .add { width: 36px; }
.tabs .add svg { fill: #4c4c4c; stroke: none; }
.tab {
  height: 19px;
  padding: 0 12px;
  margin: 0 0 1px -1px;
  border: 1px solid #8f8d8a;
  border-top: 0;
  background: #fff;
  color: #222;
  font-size: 11px;
  font-weight: 700;
  line-height: 18px;
  text-decoration: none;
}

/* Sidebar */
.splitter {
  display: flex;
  align-items: center;
  width: 7px;
  margin-bottom: 1px;
  border: 1px solid #b0aeab;
  background: #f8f7f6;
}
.splitter button { flex: none; width: 5px; height: 73px; background: #8f8d8a; box-shadow: 0 0 0 1px #8f8d8a; clip-path: inset(0 -1px); }
.splitter svg { width: 5px; height: 8px; fill: #eee; }
.sidebar {
  display: flex;
  flex: none;
  flex-direction: column;
  align-items: center;
  width: 40px;
  margin-bottom: 1px;
  border: solid #b0aeab;
  border-width: 1px 0;
}
.menu { width: 24px; height: 38px; margin-bottom: 4px; border-bottom: 1px solid #dcd9d6; }
.menu svg { width: 12px; height: 12px; margin: 0 auto; }
.side { display: flex; align-items: center; justify-content: center; width: 32px; height: 32px; margin-bottom: 3px; border: 1px solid transparent; border-radius: 4px; }
.side svg { width: 26px; height: 26px; }
.side.active { border-color: #b6b3b0; background: #efeeed; }
.side-f { fill: #223a4c; font: italic bold 23px "Liberation Serif", serif; text-anchor: middle; }
.side-x { fill: #223a4c; font: bold 13px "DejaVu Sans", sans-serif; text-anchor: middle; }

/* Status bar */
.statusbar {
  display: grid;
  flex: none;
  grid-template-columns: 125px 196px 144px 68px 29px 30px 29px 1fr 143px 51px;
  align-items: center;
  height: 22px;
  font-size: 12px;
}
.statusbar > span { height: 18px; border-right: 1px solid #dcd9d6; line-height: 20px; white-space: nowrap; }
.statusbar > span:last-child { border: 0; }
.statusbar .first { padding-left: 10px; }
.statusbar .style-name { padding-left: 8px; }
.statusbar .sum { padding-left: 2px; text-align: center; }
.statusbar .percent-value { padding-left: 7px; }
.statusbar .icon { display: flex; align-items: center; justify-content: center; }
.icon svg { width: 14px; height: 14px; }
.zoom { display: flex; align-items: center; justify-content: center; gap: 3px; padding-left: 2px; }
.zoom button { width: 12px; color: #858380; font-size: 16px; font-weight: 700; line-height: 18px; }
.zoom input { width: 98px; height: 16px; appearance: none; outline: 0; }
.zoom input::-webkit-slider-runnable-track { height: 2px; background: #b1afac; }
.zoom input::-webkit-slider-thumb { width: 9px; height: 9px; margin-top: -4px; appearance: none; border: 1px solid #777; border-radius: 50%; background: #fff; }
```
